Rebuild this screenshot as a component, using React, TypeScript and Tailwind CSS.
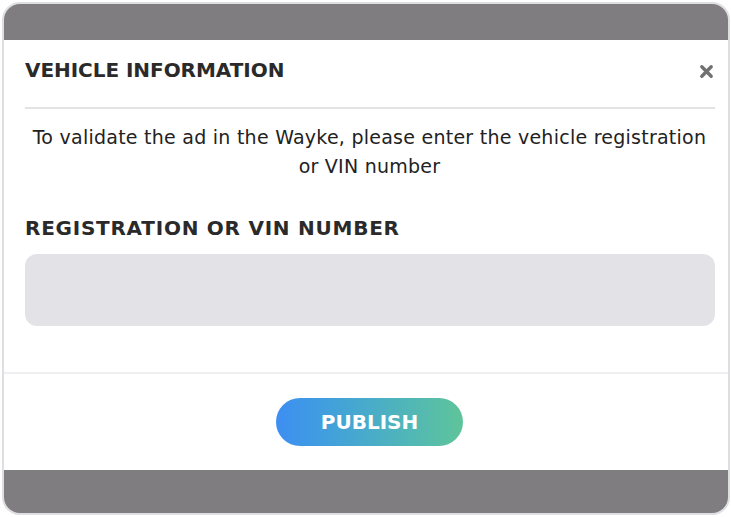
export default function App() {
  return (
    <div className="h-[517px] w-[731px] bg-white p-[2px] font-['DejaVu_Sans',sans-serif]">
      <div className="flex h-[513px] w-[728px] flex-col overflow-hidden rounded-[18px] border-2 border-[#dfdee2] bg-[#7f7d80]">
        <div className="h-[36px] shrink-0" />
        <div className="flex flex-col bg-white">
          <div className="flex items-center justify-between pl-[21px] pr-[14px] pt-[15px]">
            <h2 className="text-[20px] font-bold tracking-[-0.05px] text-[#2a2a2a]">
              VEHICLE INFORMATION
            </h2>
            <button className="mt-[2px] text-[#707070]">
              <svg width="15" height="15" viewBox="0 0 16 16">
                <path
                  d="M3 3 L13 13 M13 3 L3 13"
                  stroke="currentColor"
                  strokeWidth="3.6"
                  strokeLinecap="round"
                />
              </svg>
            </button>
          </div>
          <div className="ml-[21px] mr-[13px] mt-[22px] h-[2px] bg-[#e3e3e5]" />
          <p className="mt-[14px] pl-[10px] pr-[3px] text-center text-[19px] leading-[29px] tracking-[0.25px] text-[#222]">
            To validate the ad in the Wayke, please enter the vehicle registration
            <br />
            or VIN number
          </p>
          <label className="mt-[32px] px-[21px] text-[20px] font-bold tracking-[0.75px] text-[#2a2a2a]">
            REGISTRATION OR VIN NUMBER
          </label>
          <div className="pl-[21px] pr-[13px] pt-[11px]">
            <input className="h-[72px] w-full rounded-[12px] bg-[#e3e2e6] px-4 outline-none" />
          </div>
          <div className="mt-[46px] h-[2px] bg-[#efeff1]" />
          <div className="flex justify-center pb-[24px] pl-[7px] pt-[24px]">
            <button className="h-[48px] w-[187px] rounded-full bg-gradient-to-r from-[#3d8ef2] to-[#5fc499] text-[20px] font-bold text-white">
              PUBLISH
            </button>
          </div>
        </div>
      </div>
    </div>
  );
}
